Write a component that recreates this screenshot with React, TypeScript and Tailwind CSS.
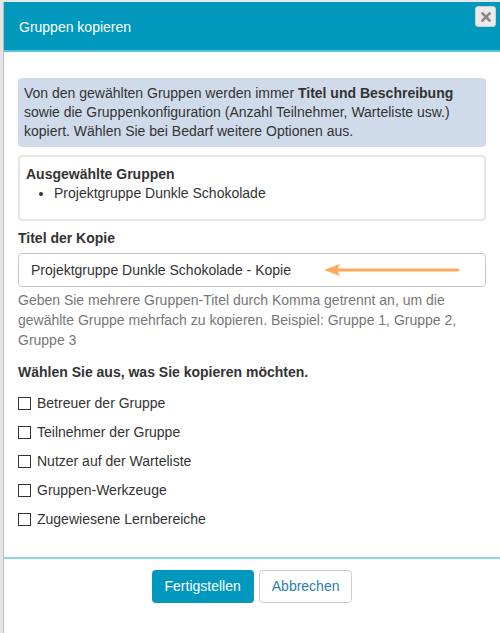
import React from 'react';

export default function App() {
  const options = [
    'Betreuer der Gruppe',
    'Teilnehmer der Gruppe',
    'Nutzer auf der Warteliste',
    'Gruppen-Werkzeuge',
    'Zugewiesene Lernbereiche',
  ];

  return (
    <div className="w-[500px] h-[633px] flex bg-[#e9e9e9] overflow-hidden" style={{ fontFamily: '"Liberation Sans", Arial, sans-serif' }}>
      {/* page behind the modal */}
      <div className="w-[3px] shrink-0 bg-[#e4e4e4]" />

      <div className="relative flex-1 mt-[2px] flex flex-col bg-white border-l border-[#bdbdbd]">
        {/* Header */}
        <div className="h-[50px] bg-[#0099bd] border-b-2 border-[#5bc4dd] flex items-center px-[15px] pt-[3px]">
          <h1 className="text-[14px] text-white">Gruppen kopieren</h1>
        </div>
        <button className="absolute top-[4px] right-[4px] w-[21px] h-[21px] rounded-[3px] bg-[#eaeaea] border border-[#d0d0d0] flex items-center justify-center">
          <svg width="10" height="10" viewBox="0 0 10 10">
            <path d="M1.5 1.5 L8.5 8.5 M8.5 1.5 L1.5 8.5" stroke="#888" strokeWidth="2.6" strokeLinecap="square" />
          </svg>
        </button>

        {/* Body */}
        <div className="flex-1 px-[14px] pt-[26px] text-[14px] text-[#333]">
          <div className="bg-[#cfdbea] rounded-[4px] px-[6px] py-[6px] leading-[19px]">
            Von den gewählten Gruppen werden immer <b>Titel und Beschreibung</b> sowie die Gruppenkonfiguration (Anzahl Teilnehmer, Warteliste usw.) kopiert. Wählen Sie bei Bedarf weitere Optionen aus.
          </div>

          <div className="mt-[8px] border-2 border-[#e6e6e6] rounded-[4px] px-[6px] pt-[8px] pb-[16px] leading-[19px]">
            <div className="font-bold">Ausgewählte Gruppen</div>
            <ul className="list-disc pl-[28px]">
              <li>Projektgruppe Dunkle Schokolade</li>
            </ul>
          </div>

          <div className="mt-[8px] font-bold leading-[19px]">Titel der Kopie</div>
          <div className="relative mt-[5px] h-[34px] border border-[#c8c8c8] rounded-[4px] flex items-center px-[12px] text-[#333]">
            Projektgruppe Dunkle Schokolade - Kopie
            <svg className="absolute left-[305px] top-[9px]" width="136" height="14" viewBox="0 0 136 14">
              <path d="M10 7 H134" stroke="#ffa95a" strokeWidth="3" strokeLinecap="round" />
              <path d="M0 7 L16 1 L13 7 L16 13 Z" fill="#ffa95a" />
            </svg>
          </div>
          <p className="mt-[3px] text-[#777] leading-[20px]">
            Geben Sie mehrere Gruppen-Titel durch Komma getrennt an, um die gewählte Gruppe mehrfach zu kopieren. Beispiel: Gruppe 1, Gruppe 2, Gruppe 3
          </p>

          <div className="mt-[13px] font-bold leading-[19px]">Wählen Sie aus, was Sie kopieren möchten.</div>
          <div className="mt-[12px] flex flex-col gap-[10px]">
            {options.map((o) => (
              <label key={o} className="flex items-center gap-[6px] leading-[19px]">
                <span className="w-[13px] h-[13px] border border-[#333] bg-white shrink-0" />
                {o}
              </label>
            ))}
          </div>
        </div>

        {/* Footer */}
        <div className="h-[76px] border-t-2 border-[#8fd3e6] flex justify-center pt-[11px] gap-[5px]">
          <button className="h-[33px] px-[13px] rounded-[4px] bg-[#0099bd] text-white text-[14px]">Fertigstellen</button>
          <button className="h-[33px] px-[12px] rounded-[4px] bg-white border border-[#ccc] text-[#2a7fa8] text-[14px]">Abbrechen</button>
        </div>
      </div>
    </div>
  );
}
